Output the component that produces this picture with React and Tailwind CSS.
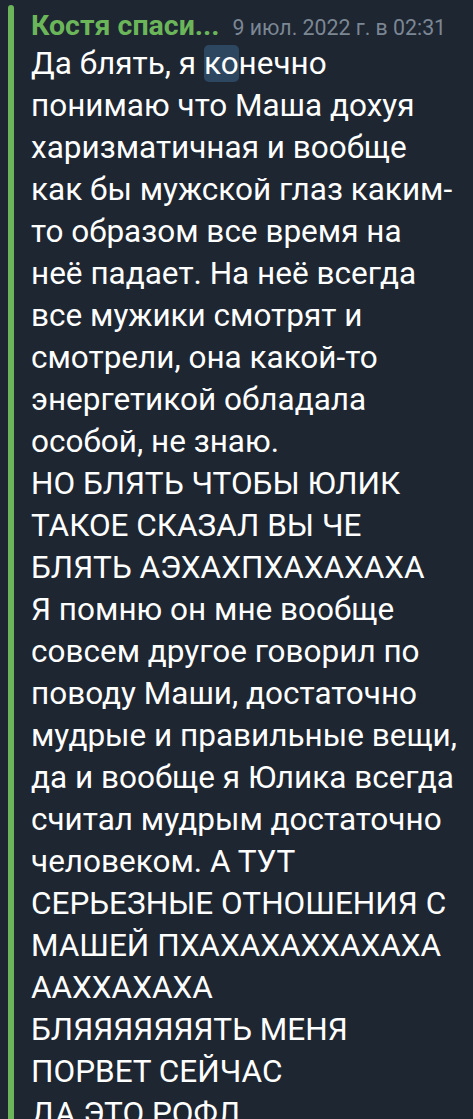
import React from 'react'

const lines = [
  null,
  "понимаю что Маша дохуя",
  "харизматичная и вообще",
  "как бы мужской глаз каким-",
  "то образом все время на",
  "неё падает. На неё всегда",
  "все мужики смотрят и",
  "смотрели, она какой-то",
  "энергетикой обладала",
  "особой, не знаю.",
  "НО БЛЯТЬ ЧТОБЫ ЮЛИК",
  "ТАКОЕ СКАЗАЛ ВЫ ЧЕ",
  "БЛЯТЬ АЭХАХПХАХАХАХА",
  "Я помню он мне вообще",
  "совсем другое говорил по",
  "поводу Маши, достаточно",
  "мудрые и правильные вещи,",
  "да и вообще я Юлика всегда",
  "считал мудрым достаточно",
  "человеком. А ТУТ",
  "СЕРЬЕЗНЫЕ ОТНОШЕНИЯ С",
  "МАШЕЙ ПХАХАХАХХАХАХА",
  "ААХХАХАХА",
  "БЛЯЯЯЯЯЯЯТЬ МЕНЯ",
  "ПОРВЕТ СЕЙЧАС",
  "ДА ЭТО РОФЛ",
]

const App = () => {
  return (
    <div className="h-[1119px] overflow-hidden bg-[#1e2632] pl-[8px] pt-[5px] font-['Roboto','Noto_Sans',sans-serif]">
      <div className="flex h-full">
        <div className="w-[6px] shrink-0 rounded-t-[3px] bg-[#6cb55a]"></div>
        <div className="pl-[17px] pt-[6px]">
          <div className="flex items-baseline gap-[13px] leading-[30px]">
            <span className="text-[28.5px] font-bold text-[#6cb65a]">Костя спаси...</span>
            <span className="text-[21.3px] text-[#7c8794]">9 июл. 2022 г. в 02:31</span>
          </div>
          <div className="text-[31.5px] leading-[42px] text-white">
            {lines.map((line, i) =>
              i === 0 ? (
                <div key={i} className="whitespace-nowrap">
                  Да блять, я <span className="rounded-[5px] bg-[#2d4760]">ко</span>нечно
                </div>
              ) : (
                <div key={i} className="whitespace-nowrap">{line}</div>
              )
            )}
          </div>
        </div>
      </div>
    </div>
  )
}

export default App
